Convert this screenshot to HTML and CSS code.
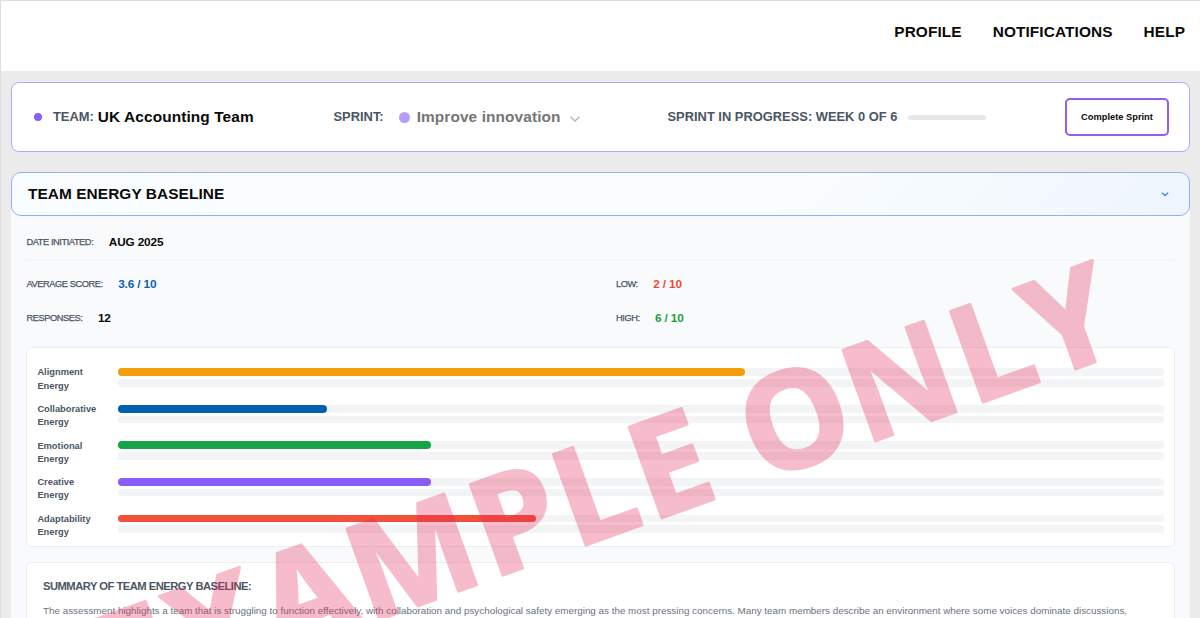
FILE: index.html
```html
<!DOCTYPE html>
<html lang="en">
<head>
  <meta charset="UTF-8" />
  <meta name="viewport" content="width=device-width, initial-scale=1.0"/>
  <title>Team Sprint</title>
  <link rel="stylesheet" href="styles.css">
</head>
<body>

  <header>
    <nav>
      <a>PROFILE</a>
      <a>NOTIFICATIONS</a>
      <a>HELP</a>
    </nav>
  </header>

  <main>
    <section class="sprint-bar">
      <div class="team">
        <span class="dot"></span>
        <span class="label">TEAM:</span>
        <span class="value">UK Accounting Team</span>
      </div>
      <div class="sprint">
        <span class="label">SPRINT:</span>
        <span class="dot light"></span>
        <span class="value muted">Improve innovation</span>
        <svg class="chevron" width="10" height="6" viewBox="0 0 10 6"><path d="M0.6 0.8L5 5L9.4 0.8" /></svg>
      </div>
      <div class="progress">
        <span class="label">SPRINT IN PROGRESS: WEEK 0 OF 6</span>
        <span class="progress-track"></span>
      </div>
      <button>Complete Sprint</button>
    </section>

    <section class="baseline">
      <div class="baseline-header">
        <h2>TEAM ENERGY BASELINE</h2>
        <svg class="chevron blue" width="8" height="5" viewBox="0 0 8 5"><path d="M0.8 0.8L4 3.6L7.2 0.8" /></svg>
      </div>

      <div class="baseline-body">
        <div class="date-row">
          <span class="meta">DATE INITIATED:</span>
          <span class="score">AUG 2025</span>
        </div>

        <div class="stats">
          <div><span class="meta">AVERAGE SCORE:</span><span class="score blue">3.6 / 10</span></div>
          <div><span class="meta">LOW:</span><span class="score red">2 / 10</span></div>
          <div><span class="meta">RESPONSES:</span><span class="score">12</span></div>
          <div><span class="meta">HIGH:</span><span class="score green">6 / 10</span></div>
        </div>

        <div class="card energies">
          <div class="energy">
            <div class="name">Alignment Energy</div>
            <div class="bars">
              <div class="track"><div class="fill orange" style="width: 60%"></div></div>
              <div class="track"></div>
            </div>
          </div>
          <div class="energy">
            <div class="name">Collaborative Energy</div>
            <div class="bars">
              <div class="track"><div class="fill blue" style="width: 20%"></div></div>
              <div class="track"></div>
            </div>
          </div>
          <div class="energy">
            <div class="name">Emotional Energy</div>
            <div class="bars">
              <div class="track"><div class="fill green" style="width: 30%"></div></div>
              <div class="track"></div>
            </div>
          </div>
          <div class="energy">
            <div class="name">Creative Energy</div>
            <div class="bars">
              <div class="track"><div class="fill purple" style="width: 30%"></div></div>
              <div class="track"></div>
            </div>
          </div>
          <div class="energy">
            <div class="name">Adaptability Energy</div>
            <div class="bars">
              <div class="track"><div class="fill red" style="width: 40%"></div></div>
              <div class="track"></div>
            </div>
          </div>
        </div>

        <div class="card summary">
          <h3>SUMMARY OF TEAM ENERGY BASELINE:</h3>
          <p>The assessment highlights a team that is struggling to function effectively, with collaboration and psychological safety emerging as the most pressing concerns. Many team members describe an environment where some voices dominate discussions,</p>
        </div>
      </div>
    </section>
  </main>

  <svg class="watermark" width="1200" height="618" viewBox="0 0 1200 618">
    <text transform="rotate(-19.8)" x="-134.5" y="711.5" dx="0 0 -1 -2.3 0 0 0 0 1.5 -1.5 1 1.8">EXAMPLE ONLY</text>
  </svg>

</body>
</html>
```

FILE: styles.css
```css
:root {
  --purple: #8b5cf6;
  --blue: #0060b0;
  --green: #16a34a;
  --red: #f2503b;
  --orange: #f59e0b;
  --bg: #ebebeb;
  --label: #4b5563;
  --track: #f3f4f6;
}

* {
  box-sizing: border-box;
}

body {
  margin: 0;
  height: 618px;
  overflow: hidden;
  font-family: "Liberation Sans", Arial, sans-serif;
  font-weight: bold;
  background-color: var(--bg);
  color: #0a0a0a;
  border-left: 1px solid #dedede;
  border-top: 1px solid #dedede;
}

header {
  background-color: white;
  height: 70px;
  padding: 22px 15px 0 0;
}

nav {
  display: flex;
  justify-content: flex-end;
  gap: 31px;
  font-size: 15.4px;
  letter-spacing: 0.1px;
  line-height: 18px;
}

main {
  padding: 11px 10px 0;
}

.sprint-bar {
  height: 70px;
  display: flex;
  align-items: center;
  padding: 0 20px 0 22px;
  background: white;
  border: 1px solid #b9a5f6;
  border-radius: 8px;
}

.sprint-bar > div {
  display: flex;
  align-items: center;
}

.team {
  width: 299.5px;
}

.sprint {
  width: 334px;
}

.progress {
  flex: 1;
}

.dot {
  width: 8px;
  height: 8px;
  border-radius: 50%;
  background: var(--purple);
  margin-right: 11px;
}

.dot.light {
  width: 11px;
  height: 11px;
  background: #b79df9;
  margin: 0 7px 0 15px;
}

.label {
  font-size: 12.9px;
  line-height: 15px;
  margin-bottom: 1px;
  color: var(--label);
}

.value {
  font-size: 15.4px;
  letter-spacing: 0.11px;
}

.team .value {
  margin-left: 4px;
}

.value.muted {
  color: #757575;
}

.chevron {
  fill: none;
  stroke: #b5b5b5;
  stroke-width: 1.3;
  margin: 3px 0 0 9px;
}

.chevron.blue {
  stroke: #3b82f6;
  margin: 0;
}

.progress-track {
  width: 78px;
  height: 5px;
  border-radius: 3px;
  background: #e5e7eb;
  margin-left: 11px;
}

button {
  width: 104px;
  height: 38px;
  padding: 0;
  background: white;
  border: 2px solid #945cf5;
  border-radius: 5px;
  font: bold 9.3px "Liberation Sans", Arial, sans-serif;
  color: #0a0a0a;
}

.baseline {
  margin-top: 20px;
  background: #f9fafc;
  border-radius: 10px 10px 0 0;
}

.baseline-header {
  height: 44px;
  display: flex;
  align-items: center;
  justify-content: space-between;
  padding: 0 20px 0 16px;
  background: linear-gradient(135deg, #f9fdff 0%, #f9fdff 65%, #eff5fe 100%);
  border: 1px solid #94aef3;
  border-radius: 10px;
}

h2 {
  margin: 0;
  font-size: 15.4px;
  letter-spacing: 0.08px;
}

.baseline-body {
  padding: 0 15px;
}

.date-row {
  height: 45px;
  padding-top: 7px;
  display: flex;
  align-items: center;
  border-bottom: 1px solid #f3f4f6;
}

.meta {
  font-size: 9.3px;
  font-weight: normal;
  letter-spacing: -0.45px;
  -webkit-text-stroke: 0.25px var(--label);
  color: var(--label);
  margin: 0 15.5px 0 0.5px;
}

.score {
  font-size: 11.8px;
  letter-spacing: -0.15px;
}

.score.blue {
  color: #0e5fb5;
}

.score.red {
  color: #f04a30;
}

.score.green {
  color: #1fa038;
}

.stats {
  display: grid;
  grid-template-columns: 589.5px 1fr;
  row-gap: 14px;
  padding: 13px 0 19px;
}

.stats > div {
  display: flex;
  align-items: center;
  height: 20px;
}

.card {
  background: white;
  border: 1px solid #eceef2;
  border-radius: 6px;
}

.energies {
  height: 200px;
  padding: 18px 10px 0;
}

.energy {
  display: flex;
  height: 36.6px;
}

.name {
  width: 80.5px;
  padding: 0.4px 15px 0 0.4px;
  font-size: 9.3px;
  line-height: 13.3px;
  color: var(--label);
}

.bars {
  flex: 1;
  padding-top: 2.3px;
}

.track {
  height: 7.7px;
  margin-bottom: 3px;
  border-radius: 3px;
  background: var(--track);
}

.fill {
  height: 100%;
  border-radius: 4px;
}

.fill.orange {
  background: var(--orange);
}

.fill.blue {
  background: var(--blue);
}

.fill.green {
  background: var(--green);
}

.fill.purple {
  background: var(--purple);
}

.fill.red {
  background: var(--red);
}

.summary {
  margin-top: 15px;
  padding: 17px 16px 0;
  height: 56px;
  border-bottom: none;
  border-radius: 6px 6px 0 0;
}

h3 {
  margin: 0;
  font-size: 11.2px;
  letter-spacing: -0.5px;
  line-height: 13px;
  color: var(--label);
}

p {
  margin: 11px 0 0;
  font-size: 9.85px;
  font-weight: normal;
  line-height: 13px;
  white-space: nowrap;
  color: #6b7280;
}

/* diagonal overlay above the whole page */
.watermark {
  position: absolute;
  top: 0;
  left: 0;
  pointer-events: none;
  opacity: 0.3;
}

.watermark text {
  font-family: "Noto Sans", "Open Sans", sans-serif;
  font-weight: 700;
  font-size: 135px;
  letter-spacing: 4.5px;
  word-spacing: -4px;
  fill: #e42555;
  stroke: #e42555;
  stroke-width: 3;
  stroke-linejoin: round;
}
```
